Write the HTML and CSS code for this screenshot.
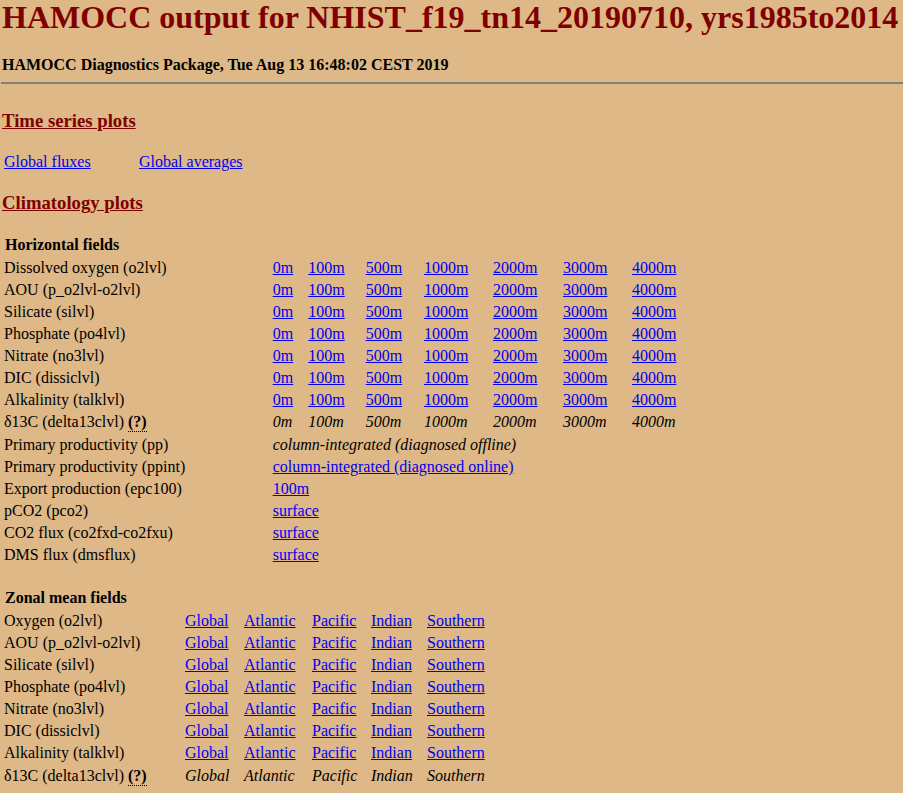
FILE: index.html
```html
<!DOCTYPE html>
<html>
<head>
<meta charset="utf-8">
<title>HAMOCC output</title>
<link rel="stylesheet" href="styles.css">
</head>
<body>
<h1 class="title">HAMOCC output for NHIST_f19_tn14_20190710, yrs1985to2014</h1>
<p class="subtitle">HAMOCC Diagnostics Package, Tue Aug 13 16:48:02 CEST 2019</p>
<hr class="rule">

<h2 class="section section-first"><a name="timeseries">Time series plots</a></h2>
<div class="ts-row">
  <a class="lnk" href="#">Global fluxes</a>
  <a class="lnk" href="#">Global averages</a>
</div>

<h2 class="section section-clim"><a name="climatology">Climatology plots</a></h2>

<div class="tbl horiz">
  <div class="row head"><span class="cell">Horizontal fields</span></div>
  <div class="row"><span class="cell">Dissolved oxygen (o2lvl)</span><a class="lnk" href="#">0m</a><a class="lnk" href="#">100m</a><a class="lnk" href="#">500m</a><a class="lnk" href="#">1000m</a><a class="lnk" href="#">2000m</a><a class="lnk" href="#">3000m</a><a class="lnk" href="#">4000m</a></div>
  <div class="row"><span class="cell">AOU (p_o2lvl-o2lvl)</span><a class="lnk" href="#">0m</a><a class="lnk" href="#">100m</a><a class="lnk" href="#">500m</a><a class="lnk" href="#">1000m</a><a class="lnk" href="#">2000m</a><a class="lnk" href="#">3000m</a><a class="lnk" href="#">4000m</a></div>
  <div class="row"><span class="cell">Silicate (silvl)</span><a class="lnk" href="#">0m</a><a class="lnk" href="#">100m</a><a class="lnk" href="#">500m</a><a class="lnk" href="#">1000m</a><a class="lnk" href="#">2000m</a><a class="lnk" href="#">3000m</a><a class="lnk" href="#">4000m</a></div>
  <div class="row"><span class="cell">Phosphate (po4lvl)</span><a class="lnk" href="#">0m</a><a class="lnk" href="#">100m</a><a class="lnk" href="#">500m</a><a class="lnk" href="#">1000m</a><a class="lnk" href="#">2000m</a><a class="lnk" href="#">3000m</a><a class="lnk" href="#">4000m</a></div>
  <div class="row"><span class="cell">Nitrate (no3lvl)</span><a class="lnk" href="#">0m</a><a class="lnk" href="#">100m</a><a class="lnk" href="#">500m</a><a class="lnk" href="#">1000m</a><a class="lnk" href="#">2000m</a><a class="lnk" href="#">3000m</a><a class="lnk" href="#">4000m</a></div>
  <div class="row"><span class="cell">DIC (dissiclvl)</span><a class="lnk" href="#">0m</a><a class="lnk" href="#">100m</a><a class="lnk" href="#">500m</a><a class="lnk" href="#">1000m</a><a class="lnk" href="#">2000m</a><a class="lnk" href="#">3000m</a><a class="lnk" href="#">4000m</a></div>
  <div class="row"><span class="cell">Alkalinity (talklvl)</span><a class="lnk" href="#">0m</a><a class="lnk" href="#">100m</a><a class="lnk" href="#">500m</a><a class="lnk" href="#">1000m</a><a class="lnk" href="#">2000m</a><a class="lnk" href="#">3000m</a><a class="lnk" href="#">4000m</a></div>
  <div class="row row-abbr"><span class="cell">δ13C (delta13clvl) <abbr class="note" title="not available">(?)</abbr></span><i class="na">0m</i><i class="na">100m</i><i class="na">500m</i><i class="na">1000m</i><i class="na">2000m</i><i class="na">3000m</i><i class="na">4000m</i></div>
  <div class="row"><span class="cell">Primary productivity (pp)</span><i class="na span-all">column-integrated (diagnosed offline)</i></div>
  <div class="row"><span class="cell">Primary productivity (ppint)</span><span class="span-all"><a class="lnk" href="#">column-integrated (diagnosed online)</a></span></div>
  <div class="row"><span class="cell">Export production (epc100)</span><span class="span-all"><a class="lnk" href="#">100m</a></span></div>
  <div class="row"><span class="cell">pCO2 (pco2)</span><span class="span-all"><a class="lnk" href="#">surface</a></span></div>
  <div class="row"><span class="cell">CO2 flux (co2fxd-co2fxu)</span><span class="span-all"><a class="lnk" href="#">surface</a></span></div>
  <div class="row"><span class="cell">DMS flux (dmsflux)</span><span class="span-all"><a class="lnk" href="#">surface</a></span></div>
</div>

<div class="tbl zonal">
  <div class="row head"><span class="cell">Zonal mean fields</span></div>
  <div class="row"><span class="cell">Oxygen (o2lvl)</span><a class="lnk" href="#">Global</a><a class="lnk" href="#">Atlantic</a><a class="lnk" href="#">Pacific</a><a class="lnk" href="#">Indian</a><a class="lnk" href="#">Southern</a></div>
  <div class="row"><span class="cell">AOU (p_o2lvl-o2lvl)</span><a class="lnk" href="#">Global</a><a class="lnk" href="#">Atlantic</a><a class="lnk" href="#">Pacific</a><a class="lnk" href="#">Indian</a><a class="lnk" href="#">Southern</a></div>
  <div class="row"><span class="cell">Silicate (silvl)</span><a class="lnk" href="#">Global</a><a class="lnk" href="#">Atlantic</a><a class="lnk" href="#">Pacific</a><a class="lnk" href="#">Indian</a><a class="lnk" href="#">Southern</a></div>
  <div class="row"><span class="cell">Phosphate (po4lvl)</span><a class="lnk" href="#">Global</a><a class="lnk" href="#">Atlantic</a><a class="lnk" href="#">Pacific</a><a class="lnk" href="#">Indian</a><a class="lnk" href="#">Southern</a></div>
  <div class="row"><span class="cell">Nitrate (no3lvl)</span><a class="lnk" href="#">Global</a><a class="lnk" href="#">Atlantic</a><a class="lnk" href="#">Pacific</a><a class="lnk" href="#">Indian</a><a class="lnk" href="#">Southern</a></div>
  <div class="row"><span class="cell">DIC (dissiclvl)</span><a class="lnk" href="#">Global</a><a class="lnk" href="#">Atlantic</a><a class="lnk" href="#">Pacific</a><a class="lnk" href="#">Indian</a><a class="lnk" href="#">Southern</a></div>
  <div class="row"><span class="cell">Alkalinity (talklvl)</span><a class="lnk" href="#">Global</a><a class="lnk" href="#">Atlantic</a><a class="lnk" href="#">Pacific</a><a class="lnk" href="#">Indian</a><a class="lnk" href="#">Southern</a></div>
  <div class="row row-abbr"><span class="cell">δ13C (delta13clvl) <abbr class="note" title="not available">(?)</abbr></span><i class="na">Global</i><i class="na">Atlantic</i><i class="na">Pacific</i><i class="na">Indian</i><i class="na">Southern</i></div>
</div>
</body>
</html>
```

FILE: styles.css
```css
html {
  background: #deb887;
}

body {
  margin: 0;
  padding: 0 0 0 2px;
  background: #deb887;
  color: #000;
  font-family: "Liberation Serif", "Times New Roman", serif;
  font-size: 16px;
}

.title {
  margin: 0 0 21px;
  font-size: 32px;
  line-height: 35px;
  font-weight: bold;
  color: #800000;
}

.subtitle {
  margin: 0;
  font-size: 16px;
  line-height: 18px;
  font-weight: bold;
}

.rule {
  margin: 8px 0 0 -1px;
  height: 2px;
  border: 0;
  background: #808080;
}

.section {
  margin: 0;
  font-size: 18.72px;
  line-height: 22px;
  font-weight: bold;
  color: #800000;
}

.section a {
  color: #800000;
  text-decoration: underline;
}

.section-first {
  margin-top: 26px;
}

.section-clim {
  margin-top: 19px;
}

.ts-row {
  display: grid;
  grid-template-columns: 135px auto;
  justify-content: start;
  margin-top: 19px;
  padding-left: 2px;
  line-height: 22px;
}

.lnk {
  color: #0000ee;
  text-decoration: underline;
}

.tbl {
  padding-left: 2px;
}

.horiz {
  margin-top: 20px;
}

.zonal {
  margin-top: 21px;
}

.row {
  display: grid;
  height: 22px;
  line-height: 22px;
  white-space: nowrap;
  justify-content: start;
}

.horiz .row {
  grid-template-columns: 268.7px 35.6px 57.4px 58.3px 69px 70px 69px auto;
}

.zonal .row {
  grid-template-columns: 181px 59px 68px 59px 56px auto;
}

.row.head {
  height: 23px;
  font-weight: bold;
}

.row.head .cell {
  padding-left: 1px;
}

.row-abbr {
  height: 23px;
}

.zonal .row-abbr {
  margin-top: 1px;
}

.lnk,
.na,
.cell {
  justify-self: start;
}

.na {
  font-style: italic;
}

.span-all {
  grid-column: 2 / -1;
}

.note {
  font-weight: bold;
  text-decoration: none;
  border-bottom: 1px dotted #000;
  line-height: 18px;
  display: inline-block;
  padding-bottom: 0;
}
```
